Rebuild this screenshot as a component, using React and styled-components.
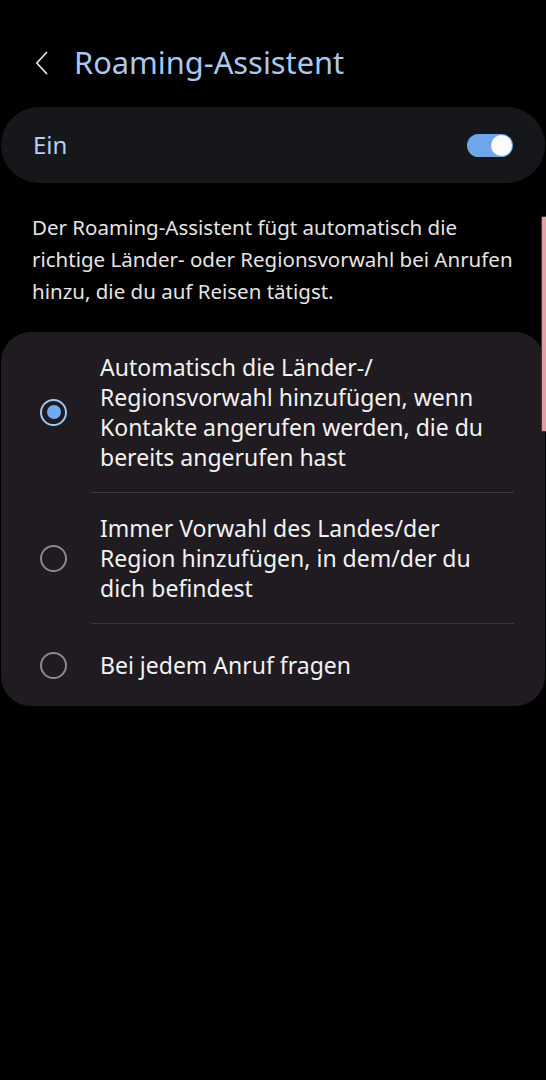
import React from "react";
import styled, { createGlobalStyle } from "styled-components";

const GlobalStyle = createGlobalStyle`
  html, body {
    margin: 0;
    padding: 0;
    background: #000;
  }
  body {
    font-family: "Noto Sans", Roboto, "Liberation Sans", sans-serif;
    -webkit-font-smoothing: antialiased;
  }
`;

const Screen = styled.div`
  position: relative;
  width: 546px;
  min-height: 1080px;
  background: #000;
  overflow: hidden;
`;

const Header = styled.header`
  display: flex;
  align-items: center;
  height: 48px;
  padding: 38px 0 0 32px;
  gap: 24px;
`;

const BackButton = styled.div`
  width: 18px;
  height: 28px;
  display: flex;
  align-items: center;
  justify-content: center;
  margin-top: 2px;
`;

const Title = styled.h1`
  margin: 0;
  font-size: 30.8px;
  font-weight: 400;
  color: #a9c7ef;
  letter-spacing: 0;
`;

const SwitchCard = styled.div`
  margin: 21px 1px 0;
  height: 76px;
  border-radius: 38px;
  background: #15171b;
  display: flex;
  align-items: center;
  justify-content: space-between;
  padding: 0 32px;
`;

const SwitchLabel = styled.span`
  font-size: 24px;
  color: #b7d0f0;
  margin-top: -2px;
`;

const Toggle = styled.div`
  position: relative;
  width: 46px;
  height: 23px;
  border-radius: 12px;
  background: ${(p) => (p.$on ? "#6fa5e9" : "#555")};
  display: flex;
  align-items: center;
  justify-content: ${(p) => (p.$on ? "flex-end" : "flex-start")};
  padding: 0 1px;
  box-sizing: border-box;
`;

const Knob = styled.div`
  width: 21px;
  height: 21px;
  border-radius: 50%;
  background: #fbfbfb;
`;

const Description = styled.p`
  margin: 28px 0 0;
  padding: 0 12px 0 32px;
  font-size: 20.5px;
  line-height: 32px;
  color: #e4e4e4;
  white-space: nowrap;
`;

const OptionsCard = styled.div`
  margin: 25px 1px 0;
  border-radius: 30px;
  background: #1f1b21;
  display: flex;
  flex-direction: column;
`;

const OptionRow = styled.div`
  display: flex;
  align-items: center;
  min-height: 82px;
  box-sizing: border-box;
  padding: 20px 20px 20px 39px;
  gap: 33px;
`;

const RadioOuter = styled.div`
  flex: none;
  width: 27px;
  height: 27px;
  border-radius: 50%;
  box-sizing: border-box;
  border: ${(p) => (p.$checked ? "2.5px solid #a3c6f0" : "2px solid #8a8a8c")};
  display: flex;
  align-items: center;
  justify-content: center;
`;

const RadioDot = styled.div`
  width: 14px;
  height: 14px;
  border-radius: 50%;
  background: #72aaf0;
`;

const OptionText = styled.span`
  font-size: 23px;
  line-height: 30px;
  color: #f2f2f2;
  white-space: nowrap;
`;

const Divider = styled.div`
  height: 1px;
  background: #3a363c;
  margin: 0 31px 0 90px;
`;

const ScrollIndicator = styled.div`
  position: absolute;
  right: 0;
  top: 216px;
  width: 4px;
  height: 214px;
  background: #dfa0a3;
  border: 1px solid #3a3a3a;
  border-right: none;
  border-radius: 2px 0 0 2px;
`;

const options = [
  {
    lines: [
      "Automatisch die Länder-/",
      "Regionsvorwahl hinzufügen, wenn",
      "Kontakte angerufen werden, die du",
      "bereits angerufen hast",
    ],
    checked: true,
  },
  {
    lines: [
      "Immer Vorwahl des Landes/der",
      "Region hinzufügen, in dem/der du",
      "dich befindest",
    ],
    checked: false,
  },
  { lines: ["Bei jedem Anruf fragen"], checked: false },
];

export default function App() {
  return (
    <>
      <GlobalStyle />
      <Screen>
        <Header>
          <BackButton>
            <svg width="13" height="24" viewBox="0 0 13 24" fill="none">
              <path d="M11.5 1.5 L1.8 12 L11.5 22.5" stroke="#e2e2e2" strokeWidth="1.8" strokeLinecap="round" strokeLinejoin="round" />
            </svg>
          </BackButton>
          <Title>Roaming-Assistent</Title>
        </Header>

        <SwitchCard>
          <SwitchLabel>Ein</SwitchLabel>
          <Toggle $on>
            <Knob />
          </Toggle>
        </SwitchCard>

        <Description>
          Der Roaming-Assistent fügt automatisch die
          <br />
          richtige Länder- oder Regionsvorwahl bei Anrufen
          <br />
          hinzu, die du auf Reisen tätigst.
        </Description>

        <OptionsCard>
          {options.map((o, i) => (
            <React.Fragment key={i}>
              {i > 0 && <Divider />}
              <OptionRow>
                <RadioOuter $checked={o.checked}>{o.checked && <RadioDot />}</RadioOuter>
                <OptionText>
                  {o.lines.map((l, j) => (
                    <React.Fragment key={j}>
                      {j > 0 && <br />}
                      {l}
                    </React.Fragment>
                  ))}
                </OptionText>
              </OptionRow>
            </React.Fragment>
          ))}
        </OptionsCard>

        <ScrollIndicator />
      </Screen>
    </>
  );
}
